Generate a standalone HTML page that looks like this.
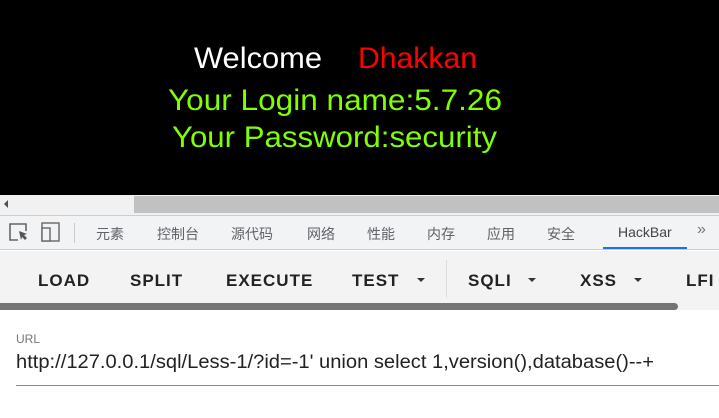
<!DOCTYPE html>
<html><head><meta charset="utf-8"><style>
*{margin:0;padding:0;box-sizing:border-box}
body{width:719px;height:418px;overflow:hidden;background:#fff;position:relative;font-family:"Liberation Sans","Noto Sans CJK SC",sans-serif}
.abs{position:absolute}
.tab{position:absolute;top:224px;font-size:14px;color:#5f6368}
.btn{position:absolute;top:271px;font-size:17px;letter-spacing:1px;color:#222;font-weight:bold}
.arr{position:absolute;top:278px;width:0;height:0;border-left:4px solid transparent;border-right:4px solid transparent;border-top:4px solid #333}
</style></head><body>
<svg class="abs" style="left:0;top:0" width="719" height="195">
<rect width="719" height="195" fill="#000"/>
<g font-family="Liberation Sans, sans-serif" font-size="30">
<text x="194" y="68" fill="#fff" textLength="128" lengthAdjust="spacingAndGlyphs">Welcome</text>
<text x="358" y="68" fill="#f00" textLength="119" lengthAdjust="spacingAndGlyphs">Dhakkan</text>
<text x="168" y="110" fill="#7fff00" textLength="334" lengthAdjust="spacingAndGlyphs">Your Login name:5.7.26</text>
<text x="172" y="147" fill="#7fff00" textLength="325" lengthAdjust="spacingAndGlyphs">Your Password:security</text>
</g></svg>
<div class="abs" style="left:0;top:195px;width:719px;height:20px;background:#f1f1f1"></div>
<div class="abs" style="left:134px;top:196px;width:585px;height:17px;background:#c1c1c1"></div>
<div class="abs" style="left:4px;top:200px;width:0;height:0;border-top:4px solid transparent;border-bottom:4px solid transparent;border-right:4px solid #505050"></div>
<div class="abs" style="left:0;top:215px;width:719px;height:35px;background:#f1f3f4;border-top:1px solid #cbcdd1;border-bottom:1px solid #cbcdd1"></div>
<svg class="abs" style="left:8px;top:222px" width="54" height="22">
<path d="M10 18H2V2h16v7" fill="none" stroke="#666" stroke-width="1.6"/>
<path d="M11 9l8 3-3 1 3 3-2 2-3-3-1 3z" fill="#555"/>
<rect x="34" y="1" width="17" height="18" fill="none" stroke="#666" stroke-width="1.4"/>
<rect x="34" y="6" width="8" height="13" fill="#f1f3f4" stroke="#666" stroke-width="1.4"/>
</svg>
<div class="abs" style="left:74px;top:223px;width:1px;height:20px;background:#ccc"></div>
<div class="tab" style="left:96px">元素</div>
<div class="tab" style="left:157px">控制台</div>
<div class="tab" style="left:231px">源代码</div>
<div class="tab" style="left:307px">网络</div>
<div class="tab" style="left:367px">性能</div>
<div class="tab" style="left:427px">内存</div>
<div class="tab" style="left:487px">应用</div>
<div class="tab" style="left:547px">安全</div>
<div class="tab" style="left:618px;color:#444">HackBar</div>
<div class="abs" style="left:603px;top:247px;width:84px;height:2px;background:#1a73e8"></div>
<div class="tab" style="left:697px;top:221px;font-size:16px;color:#777">»</div>
<div class="abs" style="left:0;top:251px;width:719px;height:52px;background:#f3f3f3"></div>
<div class="btn" style="left:38px">LOAD</div>
<div class="btn" style="left:130px">SPLIT</div>
<div class="btn" style="left:226px">EXECUTE</div>
<div class="btn" style="left:352px">TEST</div><div class="arr" style="left:417px"></div>
<div class="abs" style="left:446px;top:260px;width:1px;height:38px;background:#ddd"></div>
<div class="btn" style="left:468px">SQLI</div><div class="arr" style="left:528px"></div>
<div class="btn" style="left:580px">XSS</div><div class="arr" style="left:634px"></div>
<div class="btn" style="left:686px">LFI</div>
<div class="abs" style="left:0;top:303px;width:719px;height:7px;background:#f3f3f3"></div>
<div class="abs" style="left:0;top:303px;width:678px;height:7px;background:#757575;border-radius:0 4px 4px 0"></div>
<div class="abs" style="left:16px;top:332px;font-size:12px;color:#777">URL</div>
<svg class="abs" style="left:0;top:345px" width="719" height="30">
<text x="16" y="23" font-family="Liberation Sans, sans-serif" font-size="19" fill="#222" textLength="638" lengthAdjust="spacingAndGlyphs">http://127.0.0.1/sql/Less-1/?id=-1' union select 1,version(),database()--+</text>
</svg>
<div class="abs" style="left:16px;top:385px;width:703px;height:1px;background:#888"></div>
</body></html>
